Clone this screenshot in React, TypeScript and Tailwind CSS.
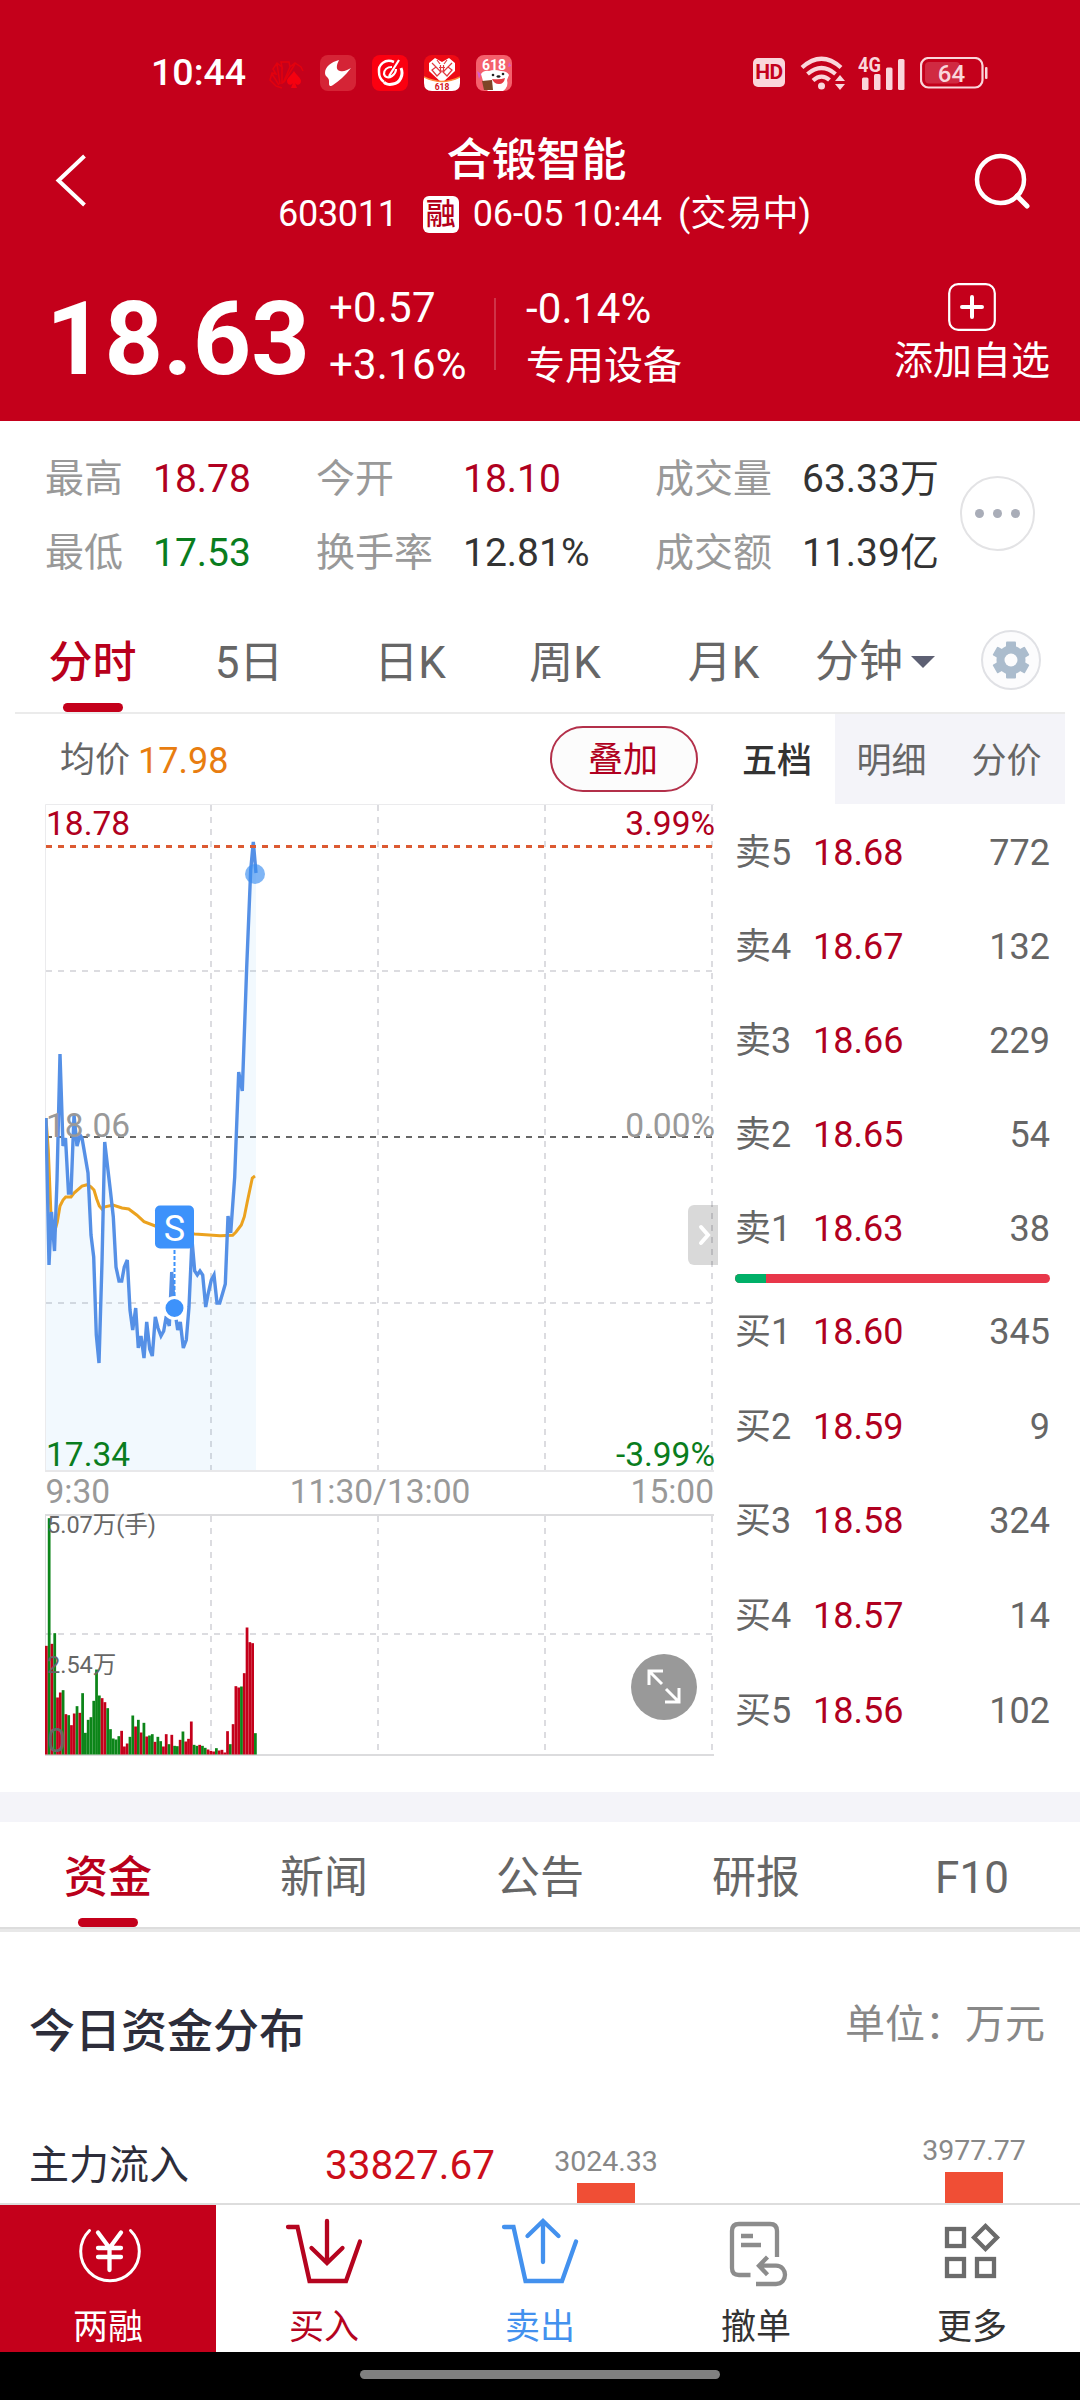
import React from 'react'
import clsx from 'clsx'

const stats = [
  ['最高', '18.78', 'text-[#b00020]', '今开', '18.10', 'text-[#b00020]', '成交量', '63.33万'],
  ['最低', '17.53', 'text-[#0a7d1e]', '换手率', '12.81%', 'text-[#333]', '成交额', '11.39亿'],
]

const periods = [
  { name: '分时', width: 'w-[155px]', active: true },
  { name: '5日', width: 'w-[158px]' },
  { name: '日K', width: 'w-[164px]' },
  { name: '周K', width: 'w-[146px]' },
  { name: '月K', width: 'w-[171px]' },
]

const sells = [
  ['卖5', '18.68', '772'],
  ['卖4', '18.67', '132'],
  ['卖3', '18.66', '229'],
  ['卖2', '18.65', '54'],
  ['卖1', '18.63', '38'],
]

const buys = [
  ['买1', '18.60', '345'],
  ['买2', '18.59', '9'],
  ['买3', '18.58', '324'],
  ['买4', '18.57', '14'],
  ['买5', '18.56', '102'],
]

const infoTabs = ['资金', '新闻', '公告', '研报', 'F10']

const priceLine =
  '46,1118 49,1265 51.5,1212 54.5,1251 57,1180 60,1054 63,1146 65.5,1138 68.5,1193 71,1193 74,1115 77,1146 80,1135 82,1138 88,1173 91,1235 93.7,1257 96.3,1335 99,1363 102,1262 104.7,1142 110.3,1190 113.3,1217 116,1267 119,1281 121.7,1281 124.3,1267 127.3,1260 130,1310 132.7,1330 135.7,1308 138.3,1348 141,1336 144,1358 146.7,1322 149.7,1349 152.3,1356 155.3,1317 158,1328 161,1336 163.7,1331 166.3,1316 169.3,1326 171.7,1272 174.5,1308 177.7,1330 180.3,1322 183.3,1348 186.3,1340 189,1307 192,1240 194.7,1271 197.3,1275 200,1271 202.7,1275 205.7,1307 208.3,1293 211.3,1280 214,1275 217,1303 219.7,1303 222.7,1293 225.3,1284 228,1216 230.7,1233 234.7,1177 238.7,1072 242.3,1091 246.7,967 250.7,870 253.3,842 256,873'

const avgLine =
  '46,1118 48.3,1150 51,1215 54,1234 57.3,1222 60,1206 63,1200 65.7,1197 71,1197 74,1193 82,1186 87.3,1184.7 91,1187 94,1190 96.7,1199 99.3,1206 102,1209 104,1207 113,1205 122,1208 128.7,1209 136.7,1215 144,1221.7 155.3,1226 175,1232 194.7,1234 220,1235.7 232.7,1235.3 236,1232 241.3,1225 244.3,1216.7 247.3,1201.7 252.3,1178 255,1176'

// one bar a minute: r = up, g = down, then the height in px * 3
const volumes =
  'r326 g709 r332 g364 r171 r186 g193 r121 g118 r88 r123 g145 r125 g184 g65 g104 g112 g161 g255 g177 r169 r157 g139 g76 g48 g45 g55 r71 r24 r33 g53 g117 r84 g104 r66 g95 r54 g57 g61 r38 g53 g40 r24 r61 g31 r59 g26 g25 r44 g69 r39 r47 r99 g29 g26 r29 g26 g20 r15 r11 r9 g19 r12 r14 r6 r70 g31 r91 r205 r201 g204 r244 r381 r337 r334 g64'.split(' ')

const HotApps = () => (
  <div className="ml-[22px] flex gap-[16px]">
    <svg className="h-[36px] w-[36px]" viewBox="0 0 36 36" fill="none" stroke="#e2000e" strokeWidth="1.500">
      <path d="M8 31 2 25l2-7 4 1-3-5 4-6 5 4-1-5h8l1 5 5-4 6 4 2 4M11 30 4 19M12 29 9 9M14 29l0-17M15 28 22 12M16 27 27 9M8 31l6 2" />
      <path d="M26 16c-3 5-7 7-7 10 0 4 4 5 6 2l-2 5h6l-2-5c2 3 6 2 6-2 0-3-4-5-7-10z" fill="#f5000f" stroke="none" />
    </svg>
    <svg className="h-[36px] w-[36px]" viewBox="0 0 36 36">
      <rect width="36" height="36" rx="8" fill="#d52436" />
      <path d="M19 5c-8 2-14 7-14 13 0 4 4 4 4 8v3c0 2 2 3 4 1 6-4 12-9 18-17-4 2-7 4-11 3-4-1-4-5-1-11z" fill="#fff" />
    </svg>
    <svg className="h-[36px] w-[36px]" viewBox="0 0 36 36" fill="none" stroke="#fff">
      <rect width="36" height="36" rx="8" fill="#fb0010" stroke="none" />
      <path d="M22 7C13 3 6 10 7 17c0 5 2 8 5 10" strokeWidth="2.500" />
      <path d="M29 13c3 7-1 15-8 16-4 1-8 0-9-2" strokeWidth="3" />
      <path d="M27 5 17 21M20 12c-5 0-8 3-8 7 1 4 5 4 8 2 3-2 4-4 4-7" strokeWidth="2.200" />
    </svg>
    <svg className="h-[36px] w-[36px]" viewBox="0 0 36 36">
      <rect width="36" height="36" rx="8" fill="#ee0a14" />
      <path d="M18 28 5 16V8l6-5 7 4 7-4 6 5v8z" fill="#fff" />
      <path d="m8 8 6 6M28 8l-6 6M8 15l4-3 5 5-4 4zM28 15l-4-3-5 5 4 4zM13 5l3 4M23 5l-3 4M15 12.500h6M15 16h6M16.500 10v8M19.500 10v8" stroke="#e23a40" strokeWidth="1.200" fill="none" />
      <path d="M0 22q18 9 36 0v6q0 8-8 8H8q-8 0-8-8z" fill="#fff" />
      <path d="M0 22q18 9 36 0" fill="none" stroke="#ff8a3c" strokeWidth="1.500" />
      <text x="18" y="34.500" textAnchor="middle" fontSize="8.500" fontWeight="700" fill="#d01020">618</text>
    </svg>
    <svg className="h-[36px] w-[36px]" viewBox="0 0 36 36">
      <rect width="36" height="36" rx="8" fill="#f4606c" />
      <text x="18" y="15" textAnchor="middle" fontSize="14" fontWeight="700" fill="#fff">618</text>
      <path d="m1 16 4 3-2 5zM33 7l2 4-3 1z" fill="#d65bd0" />
      <path d="M5 19q3-4 8-3 5-2 12 0 6 0 8 4l-2 5q2 7-4 11H12q-5-5-5-10z" fill="#fff" />
      <path d="M16 24q8 1 13-1-1 6-6 6-5 0-7-5z" fill="#e53a42" />
      <circle cx="17" cy="20" r="1.300" fill="#222" />
      <circle cx="27" cy="19" r="1.300" fill="#222" />
      <ellipse cx="22.500" cy="21.500" rx="2" ry="1.300" fill="#222" />
      <path d="m6 26 10-1 1 10H8z" fill="#7d4526" />
    </svg>
  </div>
)

const StatusIcons = () => (
  <div className="mr-[92px] ml-auto flex items-center text-[#fadde1]">
    <span className="flex h-[29px] w-[32px] items-center justify-center rounded-[5px] bg-[#fad6db] text-[21px] leading-none font-bold tracking-tight text-[#c4001b]">
      HD
    </span>
    <svg className="ml-[15px] h-[36px] w-[46px]" viewBox="0 0 46 36" fill="none" stroke="#fad6db" strokeWidth="4.200">
      <path d="M2 12.500Q21.500-5 41 12.500M7.500 19Q21.500 7 35.500 19M13 25.500Q21.500 18 29.500 25" />
      <circle cx="21.500" cy="31" r="3.500" fill="#fad6db" stroke="none" />
      <path d="m35 26 5-6 5 6zM35 29l5 6 5-6z" fill="#fad6db" stroke="none" />
    </svg>
    <svg className="ml-[12px] h-[46px] w-[48px]" viewBox="0 -7 48 46" fill="#fad6db">
      <text x="0" y="14.500" fontSize="21" fontWeight="700" textLength="23" lengthAdjust="spacingAndGlyphs">4G</text>
      <rect x="4" y="20.500" width="6.500" height="12.500" rx="1.500" />
      <rect x="16" y="17" width="6.500" height="16" rx="1.500" />
      <rect x="28" y="10.500" width="6.500" height="22.500" rx="1.500" />
      <rect x="40" y="2" width="6.500" height="31" rx="1.500" />
    </svg>
    <svg className="ml-[14px] h-[32px] w-[68px]" viewBox="0 0 68 32">
      <rect x="1" y="1" width="61.500" height="29.500" rx="7.500" fill="none" stroke="#fad6db" strokeWidth="2.200" />
      <rect x="5" y="5" width="35" height="21.500" rx="4" fill="#d02a42" />
      <rect x="65" y="10" width="2.500" height="12" rx="1" fill="#fad6db" />
      <text x="31.500" y="24.500" textAnchor="middle" fontSize="24" fontWeight="500" fill="#fad6db">64</text>
    </svg>
  </div>
)

const Header = () => (
  <header className="h-[421px] bg-[#c4001b] text-white">
    <div className="flex h-[108px] items-center pt-[37px] pl-[151px]">
      <span className="w-[95px] text-[37.5px] leading-none font-medium">10:44</span>
      <HotApps />
      <StatusIcons />
    </div>

    <div className="flex h-[144px]">
      <svg className="mt-[42px] ml-[50px] h-[60px] w-[40px]" viewBox="0 0 40 60" fill="none" stroke="#fff" strokeWidth="4">
        <path d="M34.500 6 8.500 30.500l26 24.500" />
      </svg>
      <div className="ml-[110px] flex w-[680px] flex-col items-center pt-[27px]">
        <h1 className="pr-[7px] text-[45px] leading-[52px] font-medium">合锻智能</h1>
        <div className="flex items-center pl-[9px] text-[36px] leading-[54px]">
          <span className="tracking-[-0.3px]">603011</span>
          <span className="mr-[14px] ml-[25px] flex h-[37px] w-[36px] items-center justify-center rounded-[6px] bg-white text-[30px] leading-none font-medium text-[#b3001a]">
            融
          </span>
          <span>06-05 10:44</span>
          <span className="ml-[16px]">(交易中)</span>
        </div>
      </div>
      <svg className="mt-[40px] ml-[90px] h-[64px] w-[64px]" viewBox="0 0 64 64" fill="none" stroke="#fff" strokeWidth="4.500">
        <circle cx="30.500" cy="31.500" r="23.500" />
        <path d="m47 48 10 10" strokeWidth="5" strokeLinecap="round" />
      </svg>
    </div>

    <div className="flex">
      <span className="w-[329px] pt-[28px] pl-[46px] text-[102px] leading-[118px] font-bold">18.63</span>
      <div className="w-[165px] pt-[27px] text-[42px] leading-[57px] tracking-[0.2px]">
        <p>+0.57</p>
        <p>+3.16%</p>
      </div>
      <div className="mt-[46px] h-[72px] w-[2px] bg-white/20"></div>
      <div className="ml-[30px] pt-[28px] text-[39px] leading-[57px]">
        <p className="text-[42px] tracking-[0.2px]">-0.14%</p>
        <p className="pt-px">专用设备</p>
      </div>
      <div className="mt-[31px] mr-[30px] ml-auto flex flex-col items-center">
        <svg className="h-[48px] w-[48px]" viewBox="0 0 48 48" fill="none" stroke="#fff">
          <rect x="1.200" y="1.200" width="45.600" height="45.600" rx="9" strokeWidth="2.200" />
          <path d="M24 14v20M14 24h20" strokeWidth="4" strokeLinecap="round" />
        </svg>
        <span className="mt-[2px] text-[39px] leading-[56px]">添加自选</span>
      </div>
    </div>
  </header>
)

const Stats = () => (
  <section className="flex h-[168px] pt-[21px] pl-[45px]">
    <div className="w-[915px] text-[39px] leading-[74px]">
      {stats.map(row => (
        <div key={row[0]} className="grid grid-cols-[108px_163px_147px_192px_147px_1fr]">
          <span className="text-[#999]">{row[0]}</span>
          <span className={row[2]}>{row[1]}</span>
          <span className="text-[#999]">{row[3]}</span>
          <span className={row[5]}>{row[4]}</span>
          <span className="text-[#999]">{row[6]}</span>
          <span className="text-[#333]">{row[7]}</span>
        </div>
      ))}
    </div>
    <div className="mt-[34px] flex h-[75px] w-[75px] items-center justify-center gap-[9px] rounded-full border-2 border-[#e3e3e5]">
      <i className="h-[9px] w-[9px] rounded-full bg-[#a9adb8]"></i>
      <i className="h-[9px] w-[9px] rounded-full bg-[#a9adb8]"></i>
      <i className="h-[9px] w-[9px] rounded-full bg-[#a9adb8]"></i>
    </div>
  </section>
)

const PeriodTabs = () => (
  <nav className="mx-[15px] flex h-[125px] border-b-2 border-[#ebebeb] pt-[32px] text-[44px] leading-[84px] text-[#666]">
    {periods.map(p => (
      <div key={p.name} className={clsx('flex flex-col items-center', p.width, p.active && 'font-medium text-[#b9001b]')}>
        <span className="h-[82px]">{p.name}</span>
        {p.active && <i className="h-[9px] w-[60px] rounded-full bg-[#c4001b]"></i>}
      </div>
    ))}
    <div className="ml-[6px] flex h-[82px] items-center">
      分钟
      <svg className="ml-[8px] h-[12px] w-[24px]" viewBox="0 0 24 12" fill="#5d6073">
        <path d="M0 0h24L12 12z" />
      </svg>
    </div>
    <svg className="mt-[8px] ml-[45px] h-[62px] w-[62px]" viewBox="-31 -31 62 62">
      <circle r="29" fill="#fcfcfd" stroke="#e0e1e5" strokeWidth="2" />
      <g fill="#abbccd">
        <rect x="-5" y="-18.500" width="10" height="37" rx="1" />
        <rect x="-5" y="-18.500" width="10" height="37" rx="1" transform="rotate(60)" />
        <rect x="-5" y="-18.500" width="10" height="37" rx="1" transform="rotate(120)" />
        <circle r="14.500" />
      </g>
      <circle r="6.500" fill="#fcfcfd" />
    </svg>
  </nav>
)

const Chart = () => (
  <svg className="ml-[30px] h-[960px] w-[674px]" viewBox="45 804 674 960" fill="none">
    <g stroke="#dcdce0" strokeWidth="2" strokeDasharray="6 6">
      <path d="M211 805V1470M378 805V1470M545 805V1470M712 805V1470" />
      <path d="M46 971H712M46 1303H712" />
      <path d="M211 1516V1754M378 1516V1754M545 1516V1754M712 1516V1754" />
      <path d="M46 1634H712" />
    </g>
    <path d="M45.500 1470V804.500H714" stroke="#ebebed" />
    <path d="M45 1471H714" stroke="#e8e8ea" strokeWidth="2" />
    <path d="M45 1515H714M45 1755H714" stroke="#dcdcde" strokeWidth="2" />
    <path d="M45.500 1515V1755" stroke="#dcdcde" />
    <path d="M46 1137H712" stroke="#666" strokeWidth="2" strokeDasharray="6 6" />

    <polygon points={`46,1470 ${priceLine} 256,1470`} fill="#2196f3" fillOpacity=".06" />
    <polyline points={avgLine} stroke="#eba21f" strokeWidth="3" />
    <polyline points={priceLine} stroke="#5590e6" strokeWidth="3.400" />
    <circle cx="255" cy="874" r="10" fill="#3b8ef0" fillOpacity=".65" />
    <path d="M46 846.500H712" stroke="#dc5a32" strokeWidth="3" strokeDasharray="6 6" />

    <path d="M174.500 1250v48" stroke="#3d92fb" strokeWidth="2" strokeDasharray="4 2" />
    <circle cx="174.500" cy="1308" r="10.500" fill="#3d92fb" stroke="#fff" strokeWidth="3" />
    <rect x="155" y="1205.500" width="39" height="43" rx="5" fill="#3d92fb" />
    <text x="174.500" y="1241" textAnchor="middle" fontSize="36" fill="#fff">S</text>

    {volumes.map((v, i) => (
      <rect
        key={i}
        x={45 + i * 2.787}
        y={1754.5 - Number(v.slice(1)) / 3}
        width="2.750"
        height={Number(v.slice(1)) / 3}
        fill={v[0] === 'r' ? '#c4001b' : '#0c8519'}
      />
    ))}

    <g fontSize="33.500">
      <text x="46" y="835" fill="#b00020">18.78</text>
      <text x="715" y="835" textAnchor="end" fill="#b00020">3.99%</text>
      <text x="46" y="1137" fill="#999">18.06</text>
      <text x="715" y="1137" textAnchor="end" fill="#999">0.00%</text>
      <text x="46" y="1466" fill="#0a7d1e">17.34</text>
      <text x="715" y="1466" textAnchor="end" fill="#0a7d1e">-3.99%</text>
      <text x="45.500" y="1503" fill="#999">9:30</text>
      <text x="380" y="1503" textAnchor="middle" fill="#999">11:30/13:00</text>
      <text x="714" y="1503" textAnchor="end" fill="#999">15:00</text>
      <text x="47" y="1752" fill="#666">0</text>
    </g>
    <g fontSize="23.500" fill="#666">
      <text x="47" y="1533">5.07万(手)</text>
      <text x="47" y="1673">2.54万</text>
    </g>

    <path d="M718 1205h-24a6 6 0 0 0-6 6v48a6 6 0 0 0 6 6h24z" fill="#000" fillOpacity=".15" />
    <path d="m701 1227 7 8-7 8" stroke="#fff" strokeWidth="4" strokeLinecap="round" />
    <circle cx="664" cy="1687" r="33" fill="#999" />
    <path d="M649 1685v-14h14M649 1671l13 13M666 1689l13 13M679 1688v14h-14" stroke="#fff" strokeWidth="3" />
  </svg>
)

const Level = ({ row }: { row: string[] }) => (
  <div className="flex flex-1 items-center pt-[3px] text-[36px] leading-none text-[#666]">
    <span className="w-[78px]">{row[0]}</span>
    <span className="text-[#b00020]">{row[1]}</span>
    <span className="ml-auto">{row[2]}</span>
  </div>
)

const Depth = () => (
  <div className="w-[345px]">
    <div className="flex h-[90px] text-[35px] leading-[95px] text-[#666]">
      <span className="w-[115px] pr-px text-center font-medium text-[#333]">五档</span>
      <span className="w-[115px] bg-[#f4f4f9] pr-[2px] text-center">明细</span>
      <span className="w-[115px] bg-[#f4f4f9] pr-[2px] text-center">分价</span>
    </div>
    <div className="pr-[15px] pl-[15px]">
      <div className="flex h-[470px] flex-col">{sells.map(row => <Level key={row[0]} row={row} />)}</div>
      <div className="flex h-[9px] overflow-hidden rounded-full bg-[#e8374a]">
        <i className="w-[31px] bg-[#00b068]"></i>
      </div>
      <div className="flex h-[474px] flex-col">{buys.map(row => <Level key={row[0]} row={row} />)}</div>
    </div>
  </div>
)

const Market = () => (
  <section className="flex h-[1078px] pl-[15px]">
    <div className="w-[705px]">
      <div className="flex h-[90px] items-center pl-[45px] text-[35px] text-[#666]">
        <span className="pt-[4px]">均价</span>
        <span className="ml-[8px] pt-[4px] text-[36px] text-[#e87d10]">17.98</span>
        <span className="mr-[22px] ml-auto flex h-[66px] w-[148px] items-center justify-center rounded-full border-2 border-[#b3304a] bg-[#fcfcfc] pt-[4px] pr-[2px] text-[#b00020]">
          叠加
        </span>
      </div>
      <Chart />
    </div>
    <Depth />
  </section>
)

const InfoTabs = () => (
  <nav className="flex h-[110px] border-b-3 border-[#e8e8e8] text-[44px] leading-[84px] text-[#666]">
    {infoTabs.map((t, i) => (
      <div
        key={t}
        className={clsx('flex w-[216px] flex-col items-center border-b-2 border-[#ddd] pt-[14px]', i === 0 && 'font-medium text-[#b9001b]')}
      >
        <span className="h-[82px]">{t}</span>
        {i === 0 && <i className="h-[9px] w-[60px] rounded-full bg-[#c4001b]"></i>}
      </div>
    ))}
  </nav>
)

const Funds = () => (
  <section className="h-[271px] overflow-hidden">
    <div className="flex h-[200px] items-center justify-between pr-[35px] pl-[29px]">
      <h2 className="mb-[2px] text-[46px] font-medium text-[#2d2d3a]">今日资金分布</h2>
      <span className="mb-[15px] text-[40px] text-[#888]">单位：万元</span>
    </div>
    <div className="flex h-[71px] items-end pl-[29px] text-[#2d2d3a]">
      <span className="w-[296px] text-[40px] leading-[74px]">主力流入</span>
      <span className="w-[227px] text-[40.5px] leading-[76px] text-[#cc0e1a]">33827.67</span>
      <div className="flex w-[108px] flex-col items-center text-[28.5px] leading-[36px] text-[#888]">
        3024.33
        <i className="mt-[3px] h-[20px] w-[58px] bg-[#f04e35]"></i>
      </div>
      <div className="ml-[260px] flex w-[108px] flex-col items-center text-[28.5px] leading-[36px] text-[#888]">
        3977.77
        <i className="mt-[3px] h-[31px] w-[58px] bg-[#f04e35]"></i>
      </div>
    </div>
  </section>
)

const NavItem = ({ label, className, children }: { label: string; className: string; children: React.ReactNode }) => (
  <div className={clsx('flex w-[216px] flex-col items-center pt-[5px]', className)}>
    <svg className="h-[90px] w-[90px] shrink-0" viewBox="0 0 90 90" fill="none" stroke="currentColor" strokeWidth="4.300">
      {children}
    </svg>
    <span className="h-[52px] text-[35px] leading-[55px]">{label}</span>
  </div>
)

const BottomNav = () => (
  <footer>
    <div className="flex h-[149px] border-t-2 border-[#ddd]">
      <NavItem label="两融" className="bg-[#c4001b] text-white">
        <path d="M26.500 20.500A29.300 29.300 0 1 0 67.500 20.500" strokeWidth="3" strokeLinecap="round" />
        <path d="m35 22.500 11.500 15.500L58 22.500M46.500 38v22M35 38h23M35 47h23" strokeLinecap="round" />
      </NavItem>
      <NavItem label="买入" className="text-[#b5041f]">
        <path d="M9 17h9.500L30.500 71H67l14-39.500" strokeLinecap="round" />
        <path d="M48 11v41M32.500 38 48 53l15.500-15" strokeLinecap="round" />
      </NavItem>
      <NavItem label="卖出" className="text-[#4391ee]">
        <path d="M9 17h9.500L30.500 71H67l14-39.500" strokeLinecap="round" />
        <path d="M48 52V12M32.500 26 48 11l15.500 15" strokeLinecap="round" />
      </NavItem>
      <NavItem label="撤单" className="text-[#333]">
        <g stroke="#8c8c8c">
          <path d="M66 47V21q0-7-7-7H28q-7 0-7 7v37q0 7 7 7h11.500" />
          <path d="M30 26h12M30 35h20M56.500 47 48 55.700l8.500 9M48 55.700h17c12 0 12 18.300 0 18.300H45" />
        </g>
      </NavItem>
      <NavItem label="更多" className="text-[#333]">
        <g stroke="#6b6b6b">
          <rect x="20" y="19" width="17" height="17" />
          <rect x="20" y="49" width="17" height="17" />
          <rect x="50" y="49" width="17" height="17" />
          <path d="m58.500 16 11.500 11.500L58.500 39 47 27.500z" />
        </g>
      </NavItem>
    </div>
    <div className="flex h-[48px] justify-center bg-black pt-[18px]">
      <i className="h-[9px] w-[360px] rounded-full bg-[#808080]"></i>
    </div>
  </footer>
)

export default function App() {
  return (
    <div className="h-[2400px] w-[1080px] overflow-hidden bg-white font-[Roboto,'Noto_Sans_CJK_SC',sans-serif]">
      <Header />
      <Stats />
      <PeriodTabs />
      <Market />
      <div className="h-[30px] bg-[#f4f4f9]"></div>
      <InfoTabs />
      <Funds />
      <BottomNav />
    </div>
  )
}
